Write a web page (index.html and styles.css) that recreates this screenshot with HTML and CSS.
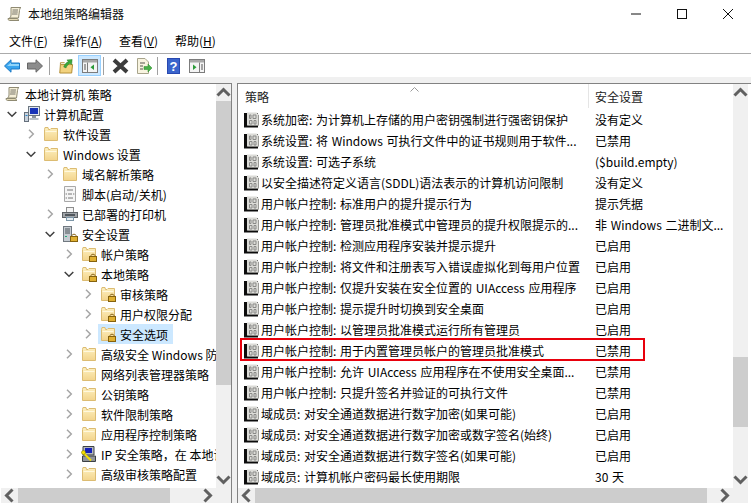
FILE: index.html
```html
<!DOCTYPE html>
<html lang="zh-CN">
<head>
<meta charset="utf-8">
<title>本地组策略编辑器</title>
<link rel="stylesheet" href="styles.css">
</head>
<body>
<svg class="defs" width="0" height="0" aria-hidden="true">
  <defs>
    <linearGradient id="fold" x1="0" y1="0" x2="0" y2="1"><stop offset="0" stop-color="#fdf0c0"/><stop offset="1" stop-color="#f3d48c"/></linearGradient>
    <symbol id="scroll" viewBox="0 0 16 16">
      <path d="M4 1.500h10c-1 .5-1.300 1.500-1.500 3L11.500 12H2.500c1-.5 1.300-1.500 1.500-3z" fill="#f5efd8" stroke="#8f8a72"/>
      <path d="M1 12.500h9.500c.5 1 1 1.800 1.500 2H2.500C1.500 14.500 1 13.500 1 12.500z" fill="#e3d9b5" stroke="#8f8a72"/>
      <path d="M5.500 4h5.500M5.300 6h5.500M5 8h5.500" stroke="#77746a"/>
    </symbol>
    <symbol id="computer" viewBox="0 0 16 16">
      <rect x="0.500" y="6.500" width="4" height="9" fill="#c9d2dc" stroke="#66707c"/>
      <rect x="4.500" y="0.500" width="11" height="9" fill="#dfe6ee" stroke="#6c7680"/>
      <rect x="6" y="2" width="8" height="6" fill="#1733b8"/>
      <rect x="8" y="10" width="4" height="2" fill="#8a949e"/>
      <rect x="5.500" y="12" width="9" height="2" fill="#b8c0c8"/>
      <rect x="1.500" y="9" width="2" height="1" fill="#2a8ad0"/>
    </symbol>
    <symbol id="folder" viewBox="0 0 16 16">
      <path d="M1.500 3.500V14.500H14.500V2.500H8L7 3.500H5.500L5 1.500H2z" fill="url(#fold)" stroke="#dcbc72"/>
      <path d="M2.500 5.500H13.500" stroke="#fff8de"/>
    </symbol>
    <symbol id="lock" viewBox="0 0 8 9">
      <path d="M2 4V2.500C2 .8 6 .8 6 2.500V4" fill="none" stroke="#8c6a20"/>
      <rect x="0.500" y="3.500" width="7" height="5" fill="#e0b030" stroke="#85620f"/>
    </symbol>
    <symbol id="folderlock" viewBox="0 0 16 16">
      <use href="#folder"/>
      <use href="#lock" x="8" y="7" width="8" height="9"/>
    </symbol>
    <symbol id="script" viewBox="0 0 16 16">
      <path d="M2.500 .5H13.500V15.500H2.500z" fill="#f5f5f5" stroke="#a8a8a8"/>
      <path d="M5 4H11M4.500 7.500L3.800 8 4.500 8.500M11.500 7.500L12.200 8 11.500 8.500M6 8H10M4.500 11.500L3.800 12 4.500 12.500M6 12H11" fill="none" stroke="#777"/>
    </symbol>
    <symbol id="printer" viewBox="0 0 16 16">
      <rect x="4.500" y="1.500" width="7" height="5" fill="#f4f4f4" stroke="#8d8d8d"/>
      <rect x="0.500" y="6.500" width="15" height="5" fill="#a0a4a8" stroke="#5c6064"/>
      <rect x="3" y="8" width="10" height="2" fill="#50565c"/>
      <rect x="4.500" y="11.500" width="7" height="3" fill="#e8eef2" stroke="#7c96a8"/>
    </symbol>
    <symbol id="serverlock" viewBox="0 0 16 16">
      <rect x="1.500" y="0.500" width="8" height="15" fill="#c6ccd2" stroke="#707880"/>
      <path d="M3 3H8M3 5H8M3 7H8" stroke="#4a5258"/>
      <rect x="3" y="10" width="2" height="1" fill="#2a7"/>
      <use href="#lock" x="8" y="7" width="8" height="9"/>
    </symbol>
    <symbol id="ip" viewBox="0 0 16 16">
      <path d="M2 .5H13V9H2z" fill="#b4b8bc" stroke="#3c4044"/>
      <rect x="4" y="2" width="7" height="5" fill="#1420b8"/>
      <path d="M1.500 10H14.500V15.500H1.500z" fill="#90949a" stroke="#3c4044"/>
      <path d="M1 5.500L3 7.500 8 12.500 10 14.500" fill="none" stroke="#f4e000" stroke-width="2"/>
      <circle cx="2.500" cy="6.500" r="2" fill="#f4e000" stroke="#786c00" stroke-width=".5"/>
    </symbol>
    <symbol id="policy" viewBox="0 0 16 16">
      <path d="M0 1H14V15.500H0z" fill="#0c0c0c"/>
      <path d="M3 .5H12.500L15 3V13.500H3z" fill="#dcdcd8"/>
      <path d="M14 3V13H4V13.500H15V3z" fill="#9a9a96"/>
      <path d="M5.500 3H7V6.500H5.500zM9 3H12V6.500H9zM5.500 8.500H8V12H5.500zM10 8.500H12V12H10z" fill="none" stroke="#8a8a88"/>
    </symbol>
    <symbol id="chev-open" viewBox="0 0 10 10"><path d="M.7 3L5 7.300 9.300 3" fill="none" stroke="#404040" stroke-width="1.500"/></symbol>
    <symbol id="chev-closed" viewBox="0 0 10 10"><path d="M3 .7L7.300 5 3 9.300" fill="none" stroke="#a6a6a6" stroke-width="1.500"/></symbol>
    <symbol id="arr-up" viewBox="0 0 10 10"><path d="M1 7L5 3 9 7" fill="none" stroke="#606060" stroke-width="2"/></symbol>
    <symbol id="arr-down" viewBox="0 0 10 10"><path d="M1 3L5 7 9 3" fill="none" stroke="#606060" stroke-width="2"/></symbol>
    <symbol id="arr-left" viewBox="0 0 10 10"><path d="M7 1L3 5 7 9" fill="none" stroke="#606060" stroke-width="2"/></symbol>
    <symbol id="arr-right" viewBox="0 0 10 10"><path d="M3 1L7 5 3 9" fill="none" stroke="#606060" stroke-width="2"/></symbol>
  </defs>
</svg>

<div class="window">
  <header class="titlebar">
    <svg class="title-icon"><use href="#scroll"/></svg>
    <span class="title">本地组策略编辑器</span>
    <div class="win-btns">
      <svg class="win-btn" viewBox="0 0 12 12"><path d="M1 6H11" stroke="#111"/></svg>
      <svg class="win-btn" viewBox="0 0 12 12"><rect x="1.500" y="1.500" width="9" height="9" fill="none" stroke="#111"/></svg>
      <svg class="win-btn" viewBox="0 0 12 12"><path d="M1 1L11 11M11 1L1 11" stroke="#111"/></svg>
    </div>
  </header>

  <nav class="menubar">
    <span class="menu">文件(<u>F</u>)</span>
    <span class="menu">操作(<u>A</u>)</span>
    <span class="menu">查看(<u>V</u>)</span>
    <span class="menu">帮助(<u>H</u>)</span>
  </nav>

  <div class="toolbar">
    <svg class="tool t-back" viewBox="0 0 16 14"><path d="M.5 7L7 .8V4H15.500V10H7V13.200z" fill="#38a4ee" stroke="#1a78c4"/><path d="M3 7L7 3.500V5H15V7z" fill="#8fd4fa"/></svg>
    <svg class="tool t-fwd" viewBox="0 0 16 14"><path d="M15.500 7L9 .8V4H.5V10H9V13.200z" fill="#8c8c8c" stroke="#666"/></svg>
    <span class="sep s1"></span>
    <svg class="tool t-up" viewBox="0 0 16 16"><path d="M1.500 6.500H14.500L13.500 15.500H.8z" fill="#f2d27e" stroke="#b08a30"/><path d="M1.500 6.500V4.500H6" fill="none" stroke="#b08a30"/><path d="M5 9C6 6 8 4 10 3.500L8.500 1.500 14 1 13.500 6.500 11.500 5.200C10 6 8 8 7.500 10z" fill="#3aa83a" stroke="#2a7a2a" stroke-width=".5"/></svg>
    <span class="tool-btn">
      <svg viewBox="0 0 16 14" width="16" height="14"><rect x=".5" y=".5" width="15" height="13" fill="#f4f4f4" stroke="#7c7c7c"/><rect x="1" y="1" width="14" height="2.500" fill="#a8a8a8"/><path d="M5.500 3.500V13.500" stroke="#7c7c7c"/><path d="M2 6H4M2 8H4M2 10H4" stroke="#555"/><path d="M12 5.500V11L8.500 8.200z" fill="#2a9a38"/></svg>
    </span>
    <span class="sep s2"></span>
    <svg class="tool t-del" viewBox="0 0 17 16"><path d="M2 2L15 14M15 2L2 14" stroke="#3c3c3c" stroke-width="4"/></svg>
    <svg class="tool t-exp" viewBox="0 0 16 16"><path d="M1.500 .5H9L12.500 4V15.500H1.500z" fill="#f8f4e0" stroke="#a8a48c"/><path d="M4 5H9M4 8H7M4 11H7" stroke="#55554c"/><path d="M8 8.500H12V6L16 10 12 14V11.500H8z" fill="#48b048" stroke="#2a8a2a" stroke-width=".5"/></svg>
    <span class="sep s3"></span>
    <svg class="tool t-help" viewBox="0 0 13 16"><rect width="13" height="16" fill="#2848b0"/><rect x="1" y="1" width="11" height="14" fill="#3a64cc"/><text x="6.500" y="13" class="help-q">?</text></svg>
    <svg class="tool t-view" viewBox="0 0 16 14"><rect x=".5" y=".5" width="15" height="13" fill="#f4f4f4" stroke="#7c7c7c"/><rect x="1" y="1" width="14" height="2.500" fill="#a8a8a8"/><path d="M10.500 3.500V13.500" stroke="#7c7c7c"/><path d="M12 6H14M12 8H14M12 10H14" stroke="#555"/><path d="M4 5.500V11L7.500 8.200z" fill="#2a9a38"/></svg>
  </div>

  <div class="strip"></div>

  <main class="panes">
    <section class="pane-left">
      <div class="pane-body">
        <div class="tree">
          <div class="node lv0"><svg class="ico"><use href="#scroll"/></svg><span class="lbl">本地计算机 策略</span></div>
          <div class="node lv0c"><svg class="chev"><use href="#chev-open"/></svg><svg class="ico"><use href="#computer"/></svg><span class="lbl">计算机配置</span></div>
          <div class="node lv1"><svg class="chev"><use href="#chev-closed"/></svg><svg class="ico"><use href="#folder"/></svg><span class="lbl">软件设置</span></div>
          <div class="node lv1"><svg class="chev"><use href="#chev-open"/></svg><svg class="ico"><use href="#folder"/></svg><span class="lbl">Windows 设置</span></div>
          <div class="node lv2"><svg class="chev"><use href="#chev-closed"/></svg><svg class="ico"><use href="#folder"/></svg><span class="lbl">域名解析策略</span></div>
          <div class="node lv2"><span class="chev"></span><svg class="ico"><use href="#script"/></svg><span class="lbl">脚本(启动/关机)</span></div>
          <div class="node lv2"><svg class="chev"><use href="#chev-closed"/></svg><svg class="ico"><use href="#printer"/></svg><span class="lbl">已部署的打印机</span></div>
          <div class="node lv2"><svg class="chev"><use href="#chev-open"/></svg><svg class="ico"><use href="#serverlock"/></svg><span class="lbl">安全设置</span></div>
          <div class="node lv3"><svg class="chev"><use href="#chev-closed"/></svg><svg class="ico"><use href="#folderlock"/></svg><span class="lbl">帐户策略</span></div>
          <div class="node lv3"><svg class="chev"><use href="#chev-open"/></svg><svg class="ico"><use href="#folderlock"/></svg><span class="lbl">本地策略</span></div>
          <div class="node lv4"><svg class="chev"><use href="#chev-closed"/></svg><svg class="ico"><use href="#folderlock"/></svg><span class="lbl">审核策略</span></div>
          <div class="node lv4"><svg class="chev"><use href="#chev-closed"/></svg><svg class="ico"><use href="#folderlock"/></svg><span class="lbl">用户权限分配</span></div>
          <div class="node lv4"><svg class="chev"><use href="#chev-closed"/></svg><span class="selected"><svg class="ico"><use href="#folderlock"/></svg><span class="lbl">安全选项</span></span></div>
          <div class="node lv3"><svg class="chev"><use href="#chev-closed"/></svg><svg class="ico"><use href="#folder"/></svg><span class="lbl">高级安全 Windows 防火墙</span></div>
          <div class="node lv3"><span class="chev"></span><svg class="ico"><use href="#folder"/></svg><span class="lbl">网络列表管理器策略</span></div>
          <div class="node lv3"><svg class="chev"><use href="#chev-closed"/></svg><svg class="ico"><use href="#folder"/></svg><span class="lbl">公钥策略</span></div>
          <div class="node lv3"><svg class="chev"><use href="#chev-closed"/></svg><svg class="ico"><use href="#folder"/></svg><span class="lbl">软件限制策略</span></div>
          <div class="node lv3"><svg class="chev"><use href="#chev-closed"/></svg><svg class="ico"><use href="#folder"/></svg><span class="lbl">应用程序控制策略</span></div>
          <div class="node lv3"><svg class="chev"><use href="#chev-closed"/></svg><svg class="ico"><use href="#ip"/></svg><span class="lbl">IP 安全策略，在 本地计算机</span></div>
          <div class="node lv3"><svg class="chev"><use href="#chev-closed"/></svg><svg class="ico"><use href="#folder"/></svg><span class="lbl">高级审核策略配置</span></div>
        </div>
        <div class="vscroll">
          <svg class="sb-btn"><use href="#arr-up"/></svg>
          <div class="vtrack"><div class="vthumb thumb-left"></div></div>
          <svg class="sb-btn"><use href="#arr-down"/></svg>
        </div>
      </div>
      <div class="hscroll hs-left">
        <svg class="sb-btn"><use href="#arr-left"/></svg>
        <div class="htrack"><div class="hthumb hthumb-left"></div></div>
        <svg class="sb-btn"><use href="#arr-right"/></svg>
      </div>
    </section>

    <section class="pane-right">
      <div class="pane-body">
        <div class="list">
          <div class="list-head">
            <span class="col-name">策略</span>
            <span class="col-val">安全设置</span>
            <svg class="sort" viewBox="0 0 9 5"><path d="M.5 4.500L4.500 .5 8.500 4.500" fill="none" stroke="#9a9a9a"/></svg>
          </div>
          <div class="row"><svg class="ico"><use href="#policy"/></svg><span class="name">系统加密: 为计算机上存储的用户密钥强制进行强密钥保护</span><span class="val">没有定义</span></div>
          <div class="row"><svg class="ico"><use href="#policy"/></svg><span class="name">系统设置: 将 Windows 可执行文件中的证书规则用于软件...</span><span class="val">已禁用</span></div>
          <div class="row"><svg class="ico"><use href="#policy"/></svg><span class="name">系统设置: 可选子系统</span><span class="val">($build.empty)</span></div>
          <div class="row"><svg class="ico"><use href="#policy"/></svg><span class="name">以安全描述符定义语言(SDDL)语法表示的计算机访问限制</span><span class="val">没有定义</span></div>
          <div class="row"><svg class="ico"><use href="#policy"/></svg><span class="name">用户帐户控制: 标准用户的提升提示行为</span><span class="val">提示凭据</span></div>
          <div class="row"><svg class="ico"><use href="#policy"/></svg><span class="name">用户帐户控制: 管理员批准模式中管理员的提升权限提示的...</span><span class="val">非 Windows 二进制文...</span></div>
          <div class="row"><svg class="ico"><use href="#policy"/></svg><span class="name">用户帐户控制: 检测应用程序安装并提示提升</span><span class="val">已启用</span></div>
          <div class="row"><svg class="ico"><use href="#policy"/></svg><span class="name">用户帐户控制: 将文件和注册表写入错误虚拟化到每用户位置</span><span class="val">已启用</span></div>
          <div class="row"><svg class="ico"><use href="#policy"/></svg><span class="name">用户帐户控制: 仅提升安装在安全位置的 UIAccess 应用程序</span><span class="val">已启用</span></div>
          <div class="row"><svg class="ico"><use href="#policy"/></svg><span class="name">用户帐户控制: 提示提升时切换到安全桌面</span><span class="val">已启用</span></div>
          <div class="row"><svg class="ico"><use href="#policy"/></svg><span class="name">用户帐户控制: 以管理员批准模式运行所有管理员</span><span class="val">已启用</span></div>
          <div class="row marked"><svg class="ico"><use href="#policy"/></svg><span class="name">用户帐户控制: 用于内置管理员帐户的管理员批准模式</span><span class="val">已禁用</span><span class="redbox"></span></div>
          <div class="row"><svg class="ico"><use href="#policy"/></svg><span class="name">用户帐户控制: 允许 UIAccess 应用程序在不使用安全桌面...</span><span class="val">已禁用</span></div>
          <div class="row"><svg class="ico"><use href="#policy"/></svg><span class="name">用户帐户控制: 只提升签名并验证的可执行文件</span><span class="val">已禁用</span></div>
          <div class="row"><svg class="ico"><use href="#policy"/></svg><span class="name">域成员: 对安全通道数据进行数字加密(如果可能)</span><span class="val">已启用</span></div>
          <div class="row"><svg class="ico"><use href="#policy"/></svg><span class="name">域成员: 对安全通道数据进行数字加密或数字签名(始终)</span><span class="val">已启用</span></div>
          <div class="row"><svg class="ico"><use href="#policy"/></svg><span class="name">域成员: 对安全通道数据进行数字签名(如果可能)</span><span class="val">已启用</span></div>
          <div class="row"><svg class="ico"><use href="#policy"/></svg><span class="name">域成员: 计算机帐户密码最长使用期限</span><span class="val">30 天</span></div>
        </div>
        <div class="vscroll">
          <svg class="sb-btn"><use href="#arr-up"/></svg>
          <div class="vtrack"><div class="vthumb thumb-right"></div></div>
          <svg class="sb-btn"><use href="#arr-down"/></svg>
        </div>
      </div>
      <div class="hscroll hs-right">
        <svg class="sb-btn"><use href="#arr-left"/></svg>
        <div class="htrack"><div class="hthumb hthumb-right"></div></div>
        <svg class="sb-btn"><use href="#arr-right"/></svg>
      </div>
    </section>
  </main>
</div>
</body>
</html>
```

FILE: styles.css
```css
* { box-sizing: border-box; }
html, body { margin: 0; padding: 0; }
body {
  width: 751px;
  height: 503px;
  overflow: hidden;
  background: #fff;
  color: #000;
  font-family: "Noto Sans CJK SC", "Noto Sans", sans-serif;
  font-size: 12px;
}
.defs { position: absolute; }
svg { display: block; flex: none; }

.window { display: flex; flex-direction: column; width: 751px; height: 503px; }

.titlebar { display: flex; align-items: center; height: 28px; padding-left: 7px; flex: none; }
.title-icon { width: 16px; height: 16px; margin-right: 5px; }
.title { color: #111; margin-top: -2px; }
.win-btns { display: flex; margin-left: auto; gap: 34px; padding-right: 17px; }
.win-btn { width: 12px; height: 12px; }

.menubar {
  display: grid; grid-template-columns: 54px 56px 56px auto; align-items: center;
  height: 26px; padding: 0 0 1px 9px; flex: none;
  border-bottom: 1px solid #ababab;
}

.toolbar { display: flex; align-items: center; height: 23px; flex: none; }
.tool { height: 16px; }
.t-back { width: 16px; height: 14px; margin-left: 4px; }
.t-fwd { width: 16px; height: 14px; margin-left: 7px; }
.sep { width: 1px; height: 18px; background: #a0a0a0; }
.s1 { margin-left: 6px; }
.t-up { width: 15px; margin-left: 9px; }
.tool-btn {
  display: flex; align-items: center; justify-content: center;
  width: 23px; height: 21px; margin-left: 4px;
  background: #cce8ff; border: 1px solid #99d1ff;
}
.s2 { margin-left: 2px; }
.t-del { width: 17px; margin-left: 8px; }
.t-exp { width: 16px; margin-left: 7px; }
.s3 { margin-left: 5px; }
.t-help { width: 13px; margin-left: 9px; }
.help-q { font: bold 13px "Liberation Sans", sans-serif; fill: #fff; text-anchor: middle; }
.t-view { width: 16px; height: 14px; margin-left: 9px; }

.strip { height: 6px; background: #f0f0f0; flex: none; }

.panes { display: flex; flex: 1; min-height: 0; background: #f0f0f0; }
.pane-left, .pane-right {
  display: flex; flex-direction: column; min-width: 0;
  background: #fff; border-top: 1px solid #828282;
}
.pane-left { width: 232px; border-right: 1px solid #828282; padding-left: 1px; }
.pane-right { width: 514px; margin-left: 5px; flex: 1; border-left: 1px solid #828282; padding-right: 3px; }
.pane-body { display: flex; flex: 1; min-height: 0; }

.tree { flex: 1; min-width: 0; overflow: hidden; }
.node { display: flex; align-items: center; height: 20px; white-space: nowrap; }
.lv0 { padding-left: 4px; }
.lv0c { padding-left: 6px; }
.lv1 { padding-left: 25px; }
.lv2 { padding-left: 44px; }
.lv3 { padding-left: 63px; }
.lv4 { padding-left: 82px; }
.chev { width: 10px; height: 10px; margin-right: 7px; flex: none; }
.ico { width: 16px; height: 16px; flex: none; }
.lbl { margin-left: 4px; }
.selected { display: flex; align-items: center; height: 20px; width: 75px; margin-left: -2px; padding-left: 2px; background: #cce8ff; }

.vscroll { display: flex; flex-direction: column; width: 15px; flex: none; background: #f0f0f0; }
.sb-btn { width: 15px; height: 17px; flex: none; }
.vtrack { flex: 1; min-height: 0; }
.vthumb { background: #cdcdcd; }
.thumb-left { height: 284px; }
.thumb-right { height: 70px; margin-top: 256px; }

.hscroll { display: flex; align-items: center; height: 15px; flex: none; background: #f0f0f0; }
.hscroll .sb-btn { width: 17px; height: 15px; }
.htrack { min-width: 0; height: 15px; }
.hthumb { height: 15px; background: #cdcdcd; }
.hs-left { padding-right: 15px; }
.hs-left .htrack { flex: 1; }
.hthumb-left { width: 152px; }
.hs-right { padding-right: 15px; }
.hs-right .htrack { flex: 1; }
.hthumb-right { width: 452px; }

.list { position: relative; flex: 1; min-width: 0; overflow: hidden; }
.list-head { position: relative; display: flex; height: 25px; line-height: 25px; }
.col-name { width: 350px; padding-left: 7px; color: #222; }
.col-val { padding-left: 6px; border-left: 1px solid #e5e5e5; height: 24px; color: #222; }
.sort { position: absolute; left: 172px; top: 3px; width: 9px; height: 5px; }

.row { position: relative; display: flex; align-items: center; height: 21px; padding-left: 6px; white-space: nowrap; word-spacing: 1px; }
.name { width: 328px; margin-left: 1px; flex: none; overflow: hidden; }
.val { margin-left: 6px; overflow: hidden; }
.redbox { position: absolute; left: 2px; top: -2px; width: 405px; height: 23px; border: 2px solid #e8000c; }
```
